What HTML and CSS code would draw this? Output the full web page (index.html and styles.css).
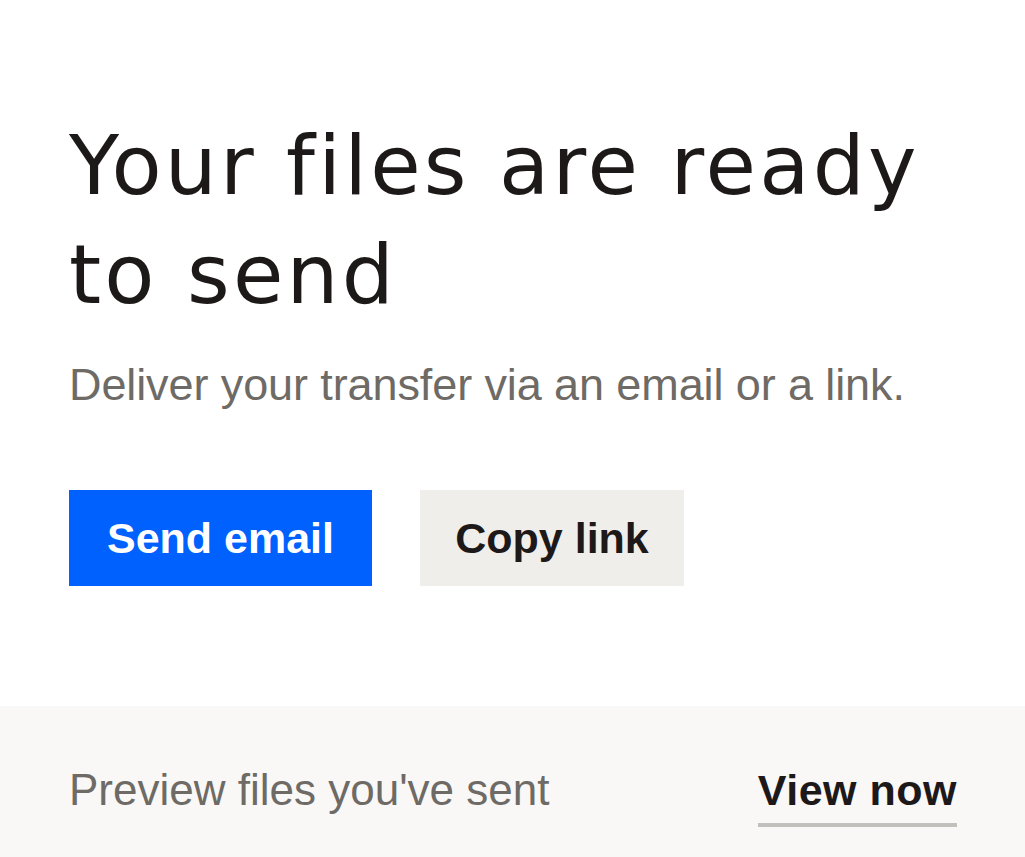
FILE: index.html
```html
<!DOCTYPE html>
<html>
<head>
<meta charset="utf-8">
<link rel="stylesheet" href="styles.css">
</head>
<body>
<main class="card">
  <section class="main">
    <h1 class="title">Your files are ready to send</h1>
    <p class="subtitle">Deliver your transfer via an email or a link.</p>
    <div class="actions">
      <button class="btn btn-primary">Send email</button>
      <button class="btn btn-secondary">Copy link</button>
    </div>
  </section>
  <footer class="footer">
    <span class="footer-text">Preview files you've sent</span>
    <a class="footer-link" href="#">View now</a>
  </footer>
</main>
</body>
</html>
```
FILE: styles.css
```css
* { box-sizing: border-box; }
html, body { margin: 0; padding: 0; background: #ffffff; }
body { font-family: "Liberation Sans", Arial, sans-serif; color: #1e1919; }
.card { width: 1025px; height: 857px; display: flex; flex-direction: column; }
.main { padding: 111px 68px 0 69px; height: 706px; }
.title {
  margin: 0;
  font-family: "DejaVu Sans", "Liberation Sans", sans-serif;
  font-weight: 400;
  font-size: 82px;
  line-height: 109px;
  color: #1e1919;
  letter-spacing: 3.2px;
}
.subtitle {
  margin: 29px 0 0;
  font-size: 45px;
  line-height: 54px;
  letter-spacing: -0.1px;
  color: #6e6a65;
}
.actions { display: flex; gap: 48px; margin-top: 78px; }
.btn {
  border: 0; border-radius: 0;
  height: 96px;
  font-family: "Liberation Sans", Arial, sans-serif;
  font-weight: 700;
  font-size: 43px;
  padding: 0;
  cursor: pointer;
}
.btn-primary { background: #0061fe; color: #ffffff; width: 303px; }
.btn-secondary { background: #f0eeea; color: #1e1919; width: 264px; }
.footer {
  flex: 1;
  background: #f9f8f6;
  display: flex;
  align-items: flex-start;
  justify-content: space-between;
  padding: 57px 68px 0 69px;
}
.footer-text { font-size: 44px; line-height: 54px; color: #6e6a65; }
.footer-link {
  margin-top: 1px;
  font-size: 43px; line-height: 52px; font-weight: 700; letter-spacing: 0.5px;
  color: #1e1919; text-decoration: none;
  border-bottom: 4px solid #c1c0bd; padding-bottom: 7px;
}
```
